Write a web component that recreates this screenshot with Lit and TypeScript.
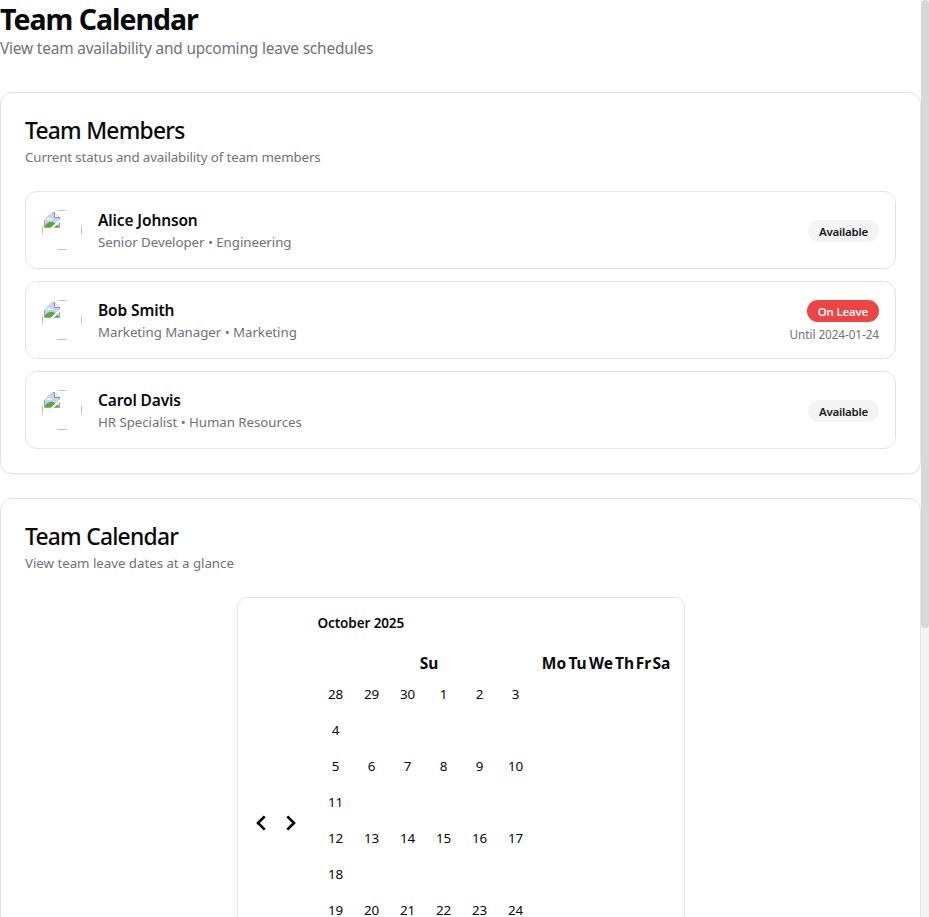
import { LitElement, html, css, svg, nothing } from "lit";
import { customElement, property } from "lit/decorators.js";

const base = css`
  :host { display: block; font-family: "Noto Sans", "Open Sans", sans-serif; color: #09090b; }
  * { box-sizing: border-box; margin: 0; padding: 0; }
`;

interface Member { name: string; role: string; department: string; until?: string; }

const MEMBERS: Member[] = [
  { name: "Alice Johnson", role: "Senior Developer", department: "Engineering" },
  { name: "Bob Smith", role: "Marketing Manager", department: "Marketing", until: "2024-01-24" },
  { name: "Carol Davis", role: "HR Specialist", department: "Human Resources" },
];

@customElement("member-row")
export class MemberRow extends LitElement {
  static styles = [base, css`
    .row { display: flex; align-items: center; height: 78px; padding: 0 16px; border: 1px solid #e4e4e7; border-radius: 12px; }
    .avatar { width: 40px; height: 40px; border-radius: 50%; overflow: hidden; flex: none; margin-right: 16px; }
    .avatar svg { display: block; }
    .info { flex: 1; }
    .name { font-size: 15.5px; font-weight: 600; line-height: 24px; letter-spacing: -0.13px; }
    .role { font-size: 13.3px; line-height: 20px; letter-spacing: -0.05px; color: #71717a; }
    .status { display: flex; flex-direction: column; align-items: flex-end; padding-top: 2px; }
    .badge { height: 22px; line-height: 24px; padding: 0 11px; border-radius: 11px; font-size: 11.5px; font-weight: 600; letter-spacing: -0.24px; background: #f4f4f5; color: #18181b; }
    .badge.away { background: #ef4444; color: #fafafa; }
    .until { margin-top: 4px; font-size: 11.7px; line-height: 16px; letter-spacing: -0.04px; color: #71717a; }
  `];
  @property({ attribute: false }) member!: Member;
  render() {
    const m = this.member;
    return html`<div class="row">
      <div class="avatar">${svg`<svg width="40" height="40" viewBox="0 0 40 40">
        <rect x=".5" y=".5" width="39" height="39" fill="none" stroke="#b8b8b8"/>
        <g transform="translate(1 1)">
          <path d="M1.500 1.500h10l5 5v10h-15z" fill="#c3d4f6" stroke="#a0a0a0"/>
          <path d="M4 9c0-2.500 2.500-3 3-1.200 1.500-.5 2.500 0 2.500 1.200z" fill="#fff"/>
          <path d="M2 16v-1.500c2-2.500 5-4.500 8-3.500 3 1 5 3.500 6 5z" fill="#57ab34"/>
          <path d="M11.500 1.500v5h5" fill="#fff" stroke="#909090"/>
          <path d="M8.500 17.500 17.500 9" stroke="#fff" stroke-width="2.200"/>
        </g></svg>`}</div>
      <div class="info"><div class="name">${m.name}</div><div class="role">${m.role} • ${m.department}</div></div>
      <div class="status">
        <div class="badge ${m.until ? "away" : ""}">${m.until ? "On Leave" : "Available"}</div>
        ${m.until ? html`<div class="until">Until ${m.until}</div>` : nothing}
      </div>
    </div>`;
  }
}

const WEEKS: number[][] = [
  [28, 29, 30, 1, 2, 3, 4],
  [5, 6, 7, 8, 9, 10, 11],
  [12, 13, 14, 15, 16, 17, 18],
  [19, 20, 21, 22, 23, 24],
];

@customElement("month-calendar")
export class MonthCalendar extends LitElement {
  static styles = [base, css`
    .box { display: flex; width: 448px; height: 452px; margin: 0 auto; border: 1px solid #e4e4e7; border-radius: 10px; }
    .nav { display: flex; align-items: center; gap: 6px; padding-left: 11px; width: 80px; flex: none; }
    .caption { height: 28px; line-height: 28px; margin-top: 11px; font-size: 13.5px; font-weight: 600; letter-spacing: -0.1px; }
    .heads { display: grid; grid-template-columns: 223px 27px 20px 27px 20px 18px 18px; margin-top: 14px; font-size: 15.5px; line-height: 25px; font-weight: 700; text-align: center; }
    .heads span { white-space: nowrap; }
    .week { display: flex; flex-wrap: wrap; width: 224px; }
    .day { width: 36px; height: 36px; line-height: 36px; text-align: center; font-size: 13.4px; letter-spacing: -0.1px; }
  `];
  render() {
    return html`<div class="box">
      <div class="nav">
        ${["M15.700 5.300 9 12l6.700 6.700", "M8.300 5.300 15 12l-6.700 6.700"].map(d => html`<svg width="24" height="24" viewBox="0 0 24 24" fill="none" stroke="#000" stroke-width="2.600"><path d=${d}/></svg>`)}
      </div>
      <div>
        <div class="caption">October 2025</div>
        <div class="heads">${["Su", "Mo", "Tu", "We", "Th", "Fr", "Sa"].map(d => html`<span>${d}</span>`)}</div>
        ${WEEKS.map(w => html`<div class="week">${w.map(d => html`<div class="day">${d}</div>`)}</div>`)}
      </div>
    </div>`;
  }
}

@customElement("app-root")
export class AppRoot extends LitElement {
  static styles = [base, css`
    .window { display: flex; height: 917px; overflow: hidden; background: #fff; }
    .page { width: 921px; flex: none; }
    h1 { font-size: 28.5px; line-height: 36px; font-weight: 700; letter-spacing: -1.02px; padding-top: 1px; height: 37px; }
    .lead { font-size: 15.4px; line-height: 24px; letter-spacing: -0.17px; color: #71717a; margin-bottom: 31px; }
    .card { border: 1px solid #e4e4e7; border-radius: 12px; padding: 24px; margin-bottom: 24px; box-shadow: 0 1px 2px rgba(0,0,0,.06); }
    h2 { font-size: 22.8px; line-height: 28px; height: 24px; font-weight: 500; letter-spacing: -0.74px; margin-bottom: 6px; }
    .desc { font-size: 13.3px; line-height: 20px; color: #71717a; margin-bottom: 24px; }
    .members-desc { letter-spacing: -0.12px; }
    .calendar-desc { letter-spacing: -0.03px; }
    .list { display: grid; gap: 12px; }
    .scroll { width: 8px; flex: none; background: #f4f4f5; }
    .thumb { height: 628px; border-radius: 4px; background: #d8d8da; }
  `];
  render() {
    return html`<div class="window">
      <main class="page">
        <h1>Team Calendar</h1>
        <p class="lead">View team availability and upcoming leave schedules</p>
        <section class="card">
          <h2>Team Members</h2>
          <p class="desc members-desc">Current status and availability of team members</p>
          <div class="list">${MEMBERS.map(m => html`<member-row .member=${m}></member-row>`)}</div>
        </section>
        <section class="card">
          <h2>Team Calendar</h2>
          <p class="desc calendar-desc">View team leave dates at a glance</p>
          <month-calendar></month-calendar>
        </section>
      </main>
      <div class="scroll"><div class="thumb"></div></div>
    </div>`;
  }
}
